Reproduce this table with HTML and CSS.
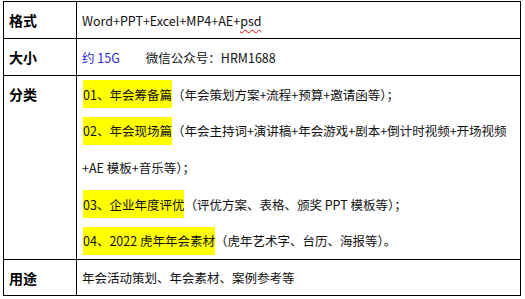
FILE: index.html
```html
<!DOCTYPE html>
<html lang="zh-CN">
<head>
<meta charset="utf-8">
<title>年会素材</title>
<link rel="stylesheet" href="styles.css">
</head>
<body>
<div class="sheet">
  <div class="label row-a">格式</div>
  <div class="value row-a">Word+PPT+Excel+MP4+AE+<span class="typo">psd</span></div>

  <div class="label row-a">大小</div>
  <div class="value row-a"><span class="blue">约 15G</span><span class="wx">微信公众号：HRM1688</span></div>

  <div class="label row-c">分类</div>
  <div class="value row-c">
    <div class="line"><span class="mark">01、年会筹备篇</span>（年会策划方案+流程+预算+邀请函等）；</div>
    <div class="line"><span class="mark">02、年会现场篇</span>（年会主持词+演讲稿+年会游戏+剧本+倒计时视频+开场视频</div>
    <div class="line">+AE 模板+音乐等）；</div>
    <div class="line"><span class="mark">03、企业年度评优</span>（评优方案、表格、颁奖 PPT 模板等）；</div>
    <div class="line"><span class="mark">04、2022 虎年年会素材</span>（虎年艺术字、台历、海报等）。</div>
  </div>

  <div class="label row-d">用途</div>
  <div class="value row-d">年会活动策划、年会素材、案例参考等</div>
</div>
</body>
</html>
```

FILE: styles.css
```css
html, body {
  margin: 0;
  padding: 0;
  background: #ffffff;
}

body {
  padding: 1px 0 0 3px;
  font-family: "Noto Sans CJK SC", "Noto Sans", sans-serif;
  color: #111111;
}

.sheet {
  display: grid;
  grid-template-columns: 73px 444px;
  grid-template-rows: 37px 37px 184px 36px;
  width: 517px;
  border-top: 1px solid #000;
  border-left: 1px solid #000;
}

.label,
.value {
  border-right: 1px solid #000;
  border-bottom: 1px solid #000;
  display: flex;
  align-items: center;
}

.label {
  padding-left: 5px;
  font-size: 14px;
  font-weight: 700;
  color: #000;
}

.value {
  padding-left: 5px;
  font-size: 12.5px;
}

.row-c {
  flex-direction: column;
  align-items: stretch;
  justify-content: flex-start;
}

.label.row-c {
  align-items: flex-start;
  padding-top: 8px;
}

.line {
  height: 36.6px;
  display: flex;
  align-items: center;
  white-space: nowrap;
}

.mark {
  background: #ffff00;
  height: 28px;
  display: inline-flex;
  align-items: center;
  margin-left: 1px;
}

.blue {
  color: #2a2ae0;
}

.wx {
  margin-left: 26px;
}

.typo {
  text-decoration: underline wavy #e00000;
  text-decoration-thickness: 1px;
  text-underline-offset: 3px;
}
```
